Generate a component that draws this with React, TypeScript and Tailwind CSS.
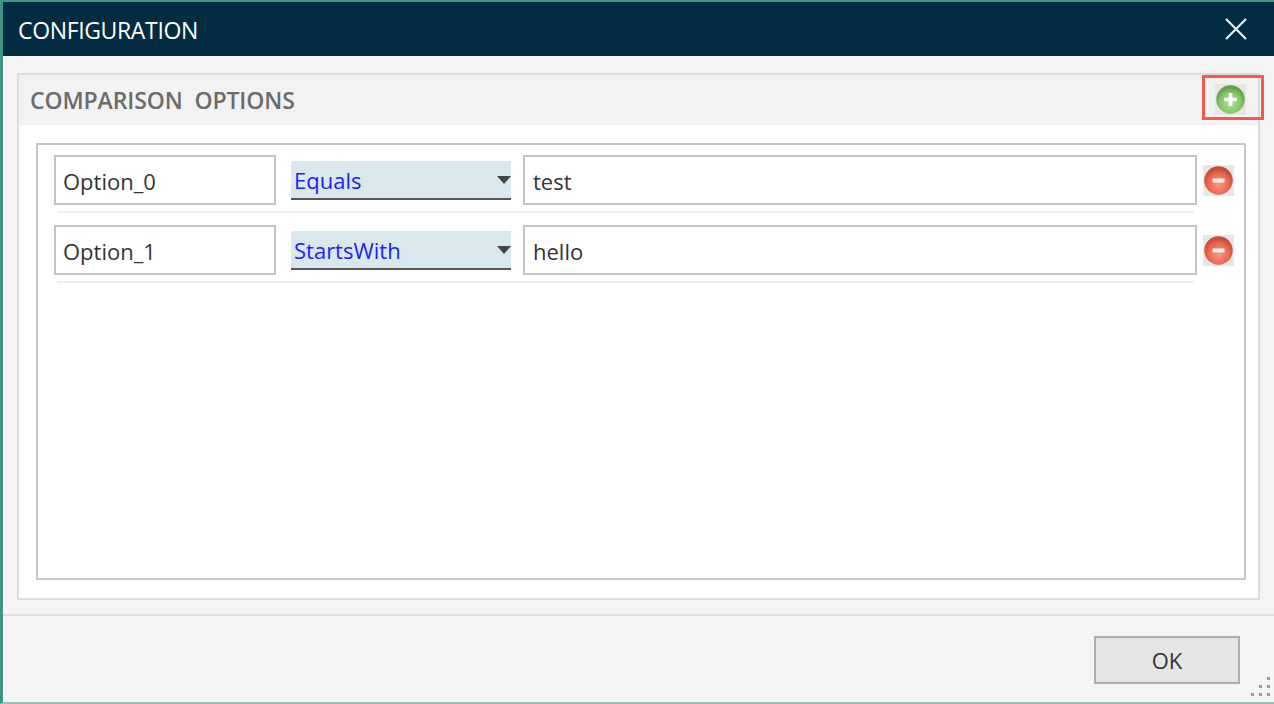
const uiFont = "[font-family:'Open_Sans','Noto_Sans',sans-serif]";

function CircleIcon({ kind }: { kind: "plus" | "minus" }) {
  const plus = kind === "plus";
  const id = plus ? "plusFill" : "minusFill";
  return (
    <svg width="31" height="31" viewBox="0 0 31 31" className="block">
      <defs>
        <radialGradient id={id} cx="50%" cy="62%" r="55%">
          <stop offset="0%" stopColor={plus ? "#b4dfa0" : "#f79a86"} />
          <stop offset="65%" stopColor={plus ? "#86c86c" : "#ec6853"} />
          <stop offset="100%" stopColor={plus ? "#629f4e" : "#c64b3c"} />
        </radialGradient>
        <filter id={`${id}Soft`}>
          <feGaussianBlur stdDeviation="0.5" />
        </filter>
      </defs>
      <rect width="31" height="31" fill="#e6e6e6" />
      <g filter={`url(#${id}Soft)`}>
        <circle cx="15.5" cy="15.5" r="14.2" fill={`url(#${id})`} />
        {plus ? (
          <path d="M15.5 9v13M9 15.5h13" stroke="#fff" strokeWidth="3.6" />
        ) : (
          <path d="M9.5 15.5h12" stroke="#fbeeea" strokeWidth="4" />
        )}
      </g>
    </svg>
  );
}

function OptionRow({ name, op, value }: { name: string; op: string; value: string }) {
  return (
    <div className="flex h-[70px] flex-col">
      <div className="flex h-[50px] items-center">
        <div className="ml-4 flex h-[50px] w-[222px] items-center border-2 border-[#c4c4c4] bg-white pl-[7px] pt-[2px] text-[22px] text-[#333]">
          {name}
        </div>
        <div className="ml-[15px] flex h-[39px] w-[220px] items-center justify-between rounded-tl-[3px] border-b-2 border-[#555] bg-[#d8e8ec] pl-[3px] pt-[2px] text-[22px] text-[#2222f0]">
          <span>{op}</span>
          <span className="h-0 w-0 border-x-[7px] border-t-[8px] border-x-transparent border-t-[#444]" />
        </div>
        <div className="ml-3 flex h-[50px] w-[674px] items-center border-2 border-[#c4c4c4] bg-white pl-2 pt-[2px] text-[22px] text-[#333]">
          {value}
        </div>
        <div className="ml-[6px]">
          <CircleIcon kind="minus" />
        </div>
      </div>
      <div className="ml-[19px] mt-[6px] h-[2px] w-[1137px] bg-[#eeeeee]" />
    </div>
  );
}

export default function App() {
  return (
    <div className={`relative flex h-[704px] w-[1274px] flex-col overflow-hidden border-l-[3px] border-t-2 border-b-2 border-[#3f9484] border-b-[#9fbdb8] bg-[#f4f4f4] ${uiFont}`}>
      <div className="flex h-[54px] shrink-0 items-center justify-between bg-[#032c42] pl-[15px] pr-[26px] text-[23px] tracking-[-0.35px] text-white">
        <span className="pt-[3px]">CONFIGURATION</span>
        <svg width="24" height="24" viewBox="0 0 24 24" fill="none" stroke="#e8eef0" strokeWidth="2.2">
          <path d="M2 2l20 20M22 2L2 22" />
        </svg>
      </div>

      <div className="ml-[14px] mt-[17px] flex h-[527px] w-[1243px] shrink-0 flex-col border-2 border-[#dcdcdc] bg-white">
        <div className="flex h-[50px] shrink-0 items-start justify-between bg-[#f2f2f2] pl-[11px]">
          <span className="mt-2 whitespace-pre text-[23px] font-semibold tracking-[-0.1px] text-[#6b6b6b]">COMPARISON  OPTIONS</span>
          <div className="mr-[-6px] h-[45px] w-[62px] border-[3px] border-[#f4594d] pl-[10px] pt-[6px]">
            <CircleIcon kind="plus" />
          </div>
        </div>
        <div className="mx-[17px] mt-[18px] h-[437px] w-[1210px] border-2 border-[#c8c8c8] bg-white pt-[10px]">
          <OptionRow name="Option_0" op="Equals" value="test" />
          <OptionRow name="Option_1" op="StartsWith" value="hello" />
        </div>
      </div>

      <div className="mt-[14px] h-[2px] shrink-0 bg-[#dedede]" />
      <div className="flex flex-1 items-start justify-end pr-[34px] pt-5">
        <button
          type="button"
          className="flex h-[48px] w-[146px] items-center justify-center border-2 border-[#adadad] bg-[#e5e5e5] text-[22px] text-[#333]"
        >
          OK
        </button>
      </div>

      <svg width="20" height="20" viewBox="0 0 20 20" fill="#9a9a9a" className="absolute bottom-[6px] right-[4px]">
        <rect x="17" y="1" width="3" height="3" />
        <rect x="9" y="9" width="3" height="3" />
        <rect x="17" y="9" width="3" height="3" />
        <rect x="1" y="17" width="3" height="3" />
        <rect x="9" y="17" width="3" height="3" />
        <rect x="17" y="17" width="3" height="3" />
      </svg>
    </div>
  );
}
